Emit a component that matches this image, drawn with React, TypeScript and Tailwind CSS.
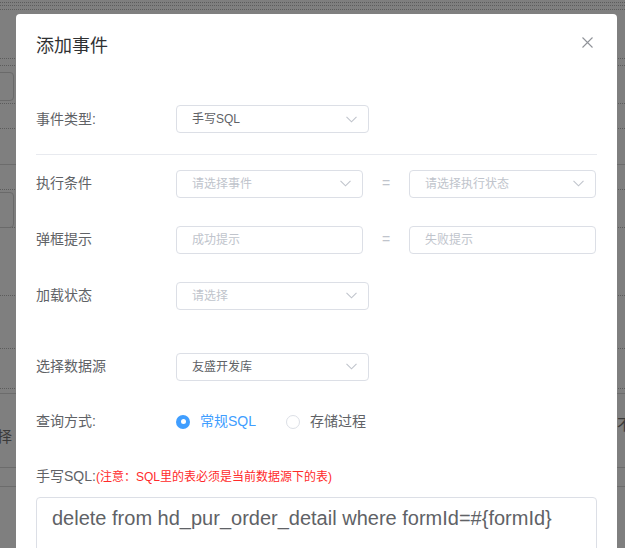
import React from 'react';

const FONT = { fontFamily: '"Liberation Sans", "Noto Sans CJK SC", sans-serif' };

function Chevron() {
  return (
    <svg width="11" height="7" viewBox="0 0 11 7" fill="none">
      <path d="M0.5 0.8 L5.5 5.8 L10.5 0.8" stroke="#c0c4cc" strokeWidth="1.1" />
    </svg>
  );
}

function Select({ value, placeholder, width }: { value?: string; placeholder?: string; width: string }) {
  return (
    <div
      className={`${width} h-[28px] border border-[#dcdfe6] rounded-[4px] pl-[15px] pr-[11px] flex items-center justify-between text-[12px]`}
    >
      <span className={value ? 'text-[#606266]' : 'text-[#c0c4cc]'}>{value ?? placeholder}</span>
      <Chevron />
    </div>
  );
}

function Input({ placeholder }: { placeholder: string }) {
  return (
    <div className="w-[187px] h-[28px] border border-[#dcdfe6] rounded-[4px] px-[15px] flex items-center text-[12px] text-[#c0c4cc]">
      {placeholder}
    </div>
  );
}

function Label({ children }: { children: React.ReactNode }) {
  return <div className="w-[140px] shrink-0 text-[14px] text-[#606266]">{children}</div>;
}

function Equals() {
  return <div className="w-[46px] text-center text-[14px] text-[#c0c4cc]">=</div>;
}

function Radio({ checked, label }: { checked?: boolean; label: string }) {
  return (
    <div className="flex items-center mr-[30px]">
      {checked ? (
        <span className="w-[14px] h-[14px] rounded-full bg-[#409eff] flex items-center justify-center">
          <span className="w-[5px] h-[5px] rounded-full bg-white" />
        </span>
      ) : (
        <span className="w-[14px] h-[14px] rounded-full border border-[#dcdfe6] bg-white" />
      )}
      <span className={`pl-[10px] text-[14px] ${checked ? 'text-[#409eff]' : 'text-[#606266]'}`}>{label}</span>
    </div>
  );
}

function Backdrop() {
  const dot = 'border-b border-dotted border-[#5c5c5c]';
  const solid = 'border-b border-[#6c6c6c]';
  return (
    <div className="flex flex-col">
      <div className={`h-[3px] ${dot}`} />
      <div className={`h-[3px] ${dot}`} />
      <div className={`h-[4px] ${dot}`} />
      <div className={`h-[49px] ${dot}`} />
      <div className={`h-[7px] ${dot}`} />
      <div className={`h-[38px] ${dot} pt-[6px]`}>
        <div className="w-[24px] h-[29px] -ml-[10px] border border-[#6a6a6a] rounded-[4px]" />
      </div>
      <div className={`h-[25px] ${dot}`} />
      <div className={`h-[36px] ${solid}`} />
      <div className={`h-[25px] ${dot}`} />
      <div className={`h-[38px] ${dot} pt-[2px]`}>
        <div className="w-[24px] h-[36px] -ml-[10px] border border-[#6a6a6a] rounded-[4px]" />
      </div>
      <div className={`h-[68px] ${dot}`} />
      <div className={`h-[53px] ${dot}`} />
      <div className={`h-[40px] ${dot}`} />
      <div className={`h-[5px] ${solid}`} />
      <div className={`h-[74px] ${solid} flex items-start justify-between text-[15px] text-[#3a3a3a]`}>
        <span className="mt-[32px] -ml-[3px]">择</span>
        <span className="mt-[20px] -mr-[7px]">不</span>
      </div>
      <div className={`h-[19px] ${solid}`} />
    </div>
  );
}

export default function App() {
  return (
    <div className="relative w-[625px] h-[548px] overflow-hidden bg-[#7f7f7f]" style={FONT}>
      <Backdrop />

      <div className="absolute left-[16px] top-[14px] w-[601px] h-[600px] bg-white rounded-[4px] px-[20px] pt-[20px] flex flex-col">
        <div className="flex justify-between h-[24px]">
          <div className="text-[18px] leading-[24px] text-[#303133]">添加事件</div>
          <svg className="mt-[3px] mr-[4px]" width="11" height="11" viewBox="0 0 11 11">
            <path d="M0.5 0.5 L10.5 10.5 M10.5 0.5 L0.5 10.5" stroke="#909399" strokeWidth="1.1" />
          </svg>
        </div>

        <div className="mt-[47px] flex items-center h-[28px]">
          <Label>事件类型:</Label>
          <Select value="手写SQL" width="w-[193px]" />
        </div>

        <div className="mt-[21px] h-px bg-[#e8eaef]" />

        <div className="mt-[15px] flex items-center h-[28px]">
          <Label>执行条件</Label>
          <Select placeholder="请选择事件" width="w-[187px]" />
          <Equals />
          <Select placeholder="请选择执行状态" width="w-[187px]" />
        </div>

        <div className="mt-[28px] flex items-center h-[28px]">
          <Label>弹框提示</Label>
          <Input placeholder="成功提示" />
          <Equals />
          <Input placeholder="失败提示" />
        </div>

        <div className="mt-[28px] flex items-center h-[28px]">
          <Label>加载状态</Label>
          <Select placeholder="请选择" width="w-[193px]" />
        </div>

        <div className="mt-[43px] flex items-center h-[28px]">
          <Label>选择数据源</Label>
          <Select value="友盛开发库" width="w-[193px]" />
        </div>

        <div className="mt-[27px] flex items-center h-[28px]">
          <Label>查询方式:</Label>
          <Radio checked label="常规SQL" />
          <Radio label="存储过程" />
        </div>

        <div className="mt-[31px] flex items-baseline h-[20px]">
          <span className="text-[14px] text-[#606266]">手写SQL:</span>
          <span className="text-[12px] text-[#ff2a2a]">(注意：SQL里的表必须是当前数据源下的表)</span>
        </div>

        <div className="mt-[11px] h-[120px] border border-[#dcdfe6] rounded-[4px] px-[15px] py-[5px] text-[20px] leading-[30px] text-[#606266]">
          delete from hd_pur_order_detail where formId=#{'{'}formId{'}'}
        </div>
      </div>
    </div>
  );
}
